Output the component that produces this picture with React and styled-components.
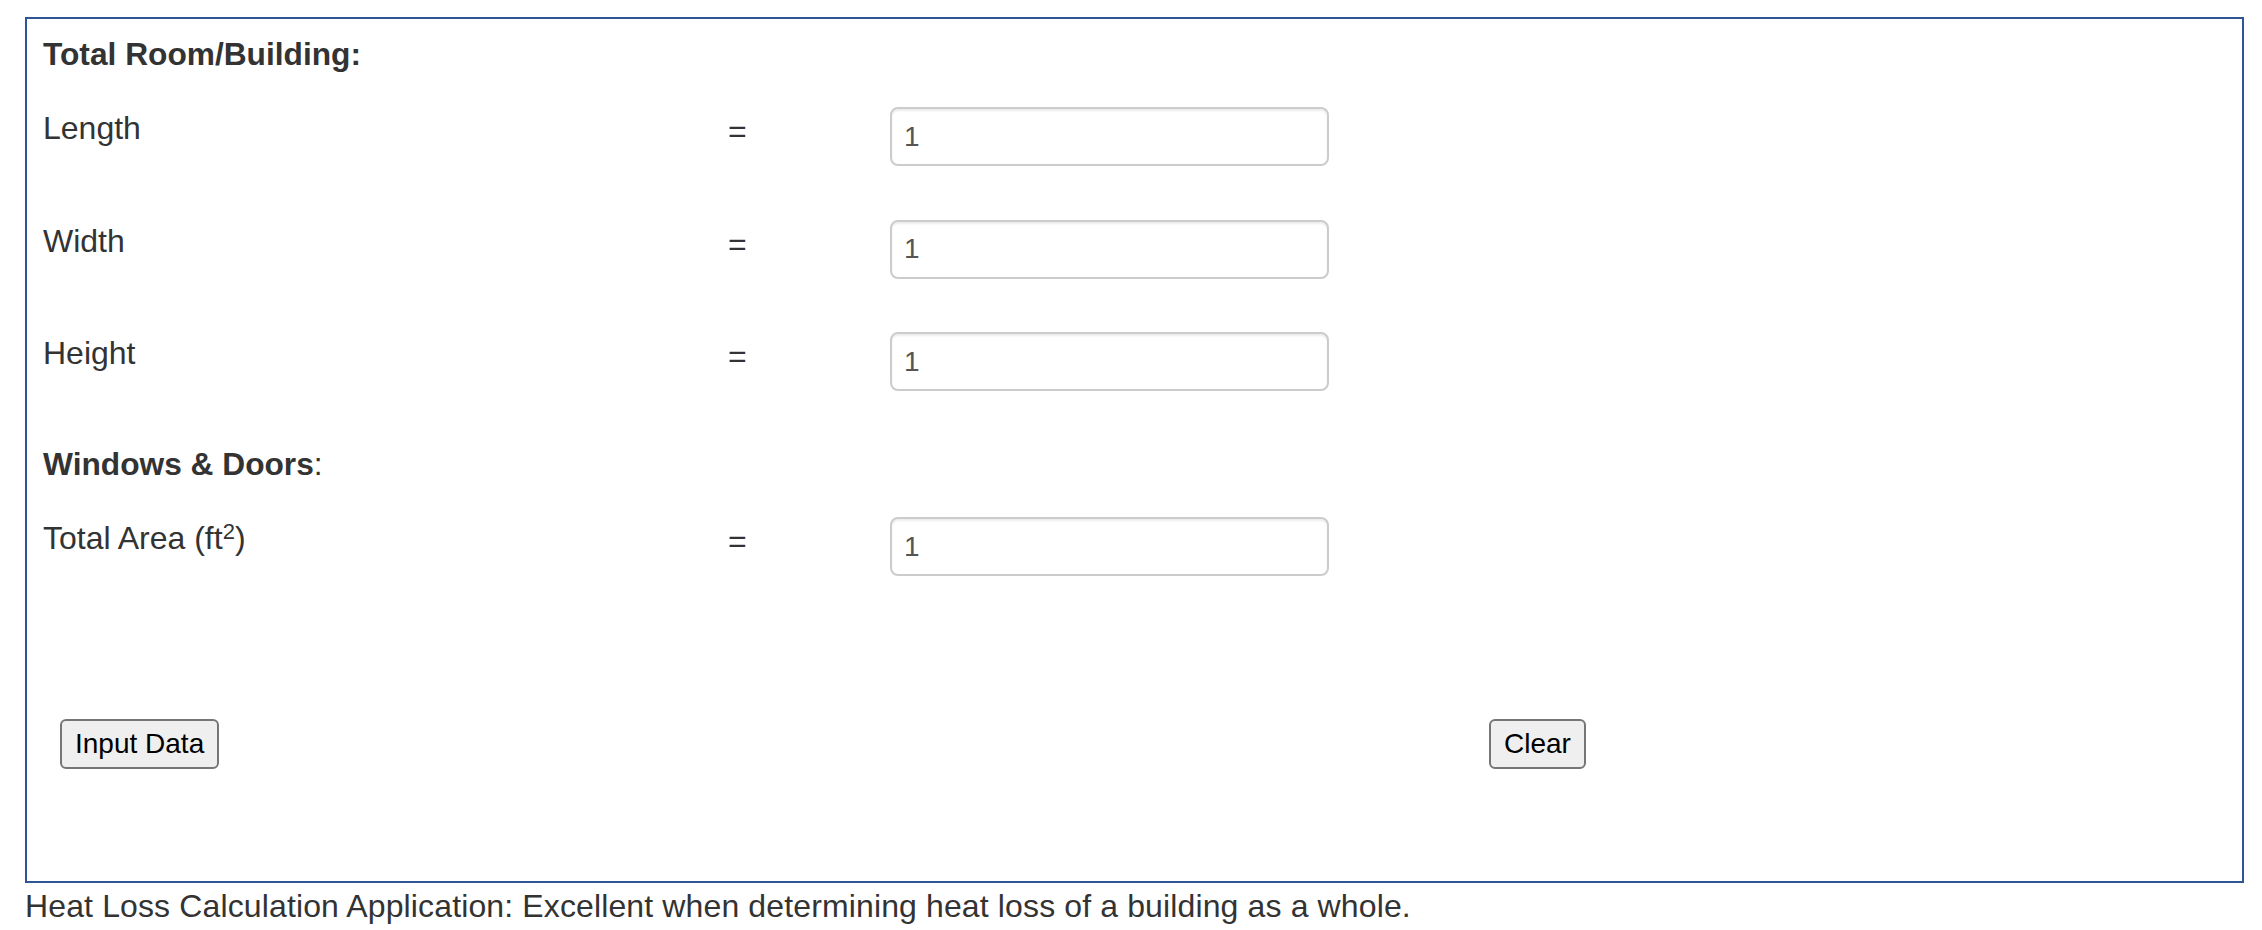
import styled, {createGlobalStyle} from 'styled-components';

const GlobalStyle = createGlobalStyle`
    html, body {
        margin: 0;
        background: #fff;
    }
    body {
        font-family: "Liberation Sans", Arial, Helvetica, sans-serif;
        color: #333;
    }
`

const Page = styled.div`
    padding: 17px 18px 0 25px;
`

const Panel = styled.form`
    border: 2px solid #2f5597;
    padding: 17px 16px 112px 16px;
    display: flex;
    flex-direction: column;
`

const Heading = styled.div`
    font-size: 31.7px;
    line-height: 37px;
    margin-top: ${({first}) => first ? '0' : '55px'};
    margin-bottom: 34px;
    b {
        font-weight: bold;
    }
`

const FieldGrid = styled.div`
    display: grid;
    grid-template-columns: 685px 162px 439px;
    row-gap: 53.5px;
    align-items: start;
`

const Label = styled.div`
    font-size: 32px;
    line-height: 37px;
    margin-top: 3px;
    sup {
        font-size: 22px;
        line-height: 0;
        position: relative;
        top: 2px;
    }
`

const Equals = styled.div`
    font-size: 32px;
    line-height: 37px;
    margin-top: 6px;
`

const Field = styled.input`
    box-sizing: border-box;
    width: 439px;
    height: 59px;
    margin: 0;
    padding: 0 12px;
    border: 2px solid #ccc;
    border-radius: 8px;
    box-shadow: inset 0 2px 2px rgba(0, 0, 0, 0.075);
    font-family: "Liberation Sans", Arial, Helvetica, sans-serif;
    font-size: 28px;
    color: #555;
    background: #fff;
    outline: none;
`

const ButtonRow = styled.div`
    display: grid;
    grid-template-columns: 1446px auto;
    justify-items: start;
    margin-top: 143px;
`

const Button = styled.button`
    box-sizing: border-box;
    height: 50px;
    margin-left: ${({indent}) => indent || 0}px;
    padding: 0 13px;
    border: 2px solid #767676;
    border-radius: 6px;
    background: #efefef;
    font-family: "Liberation Sans", Arial, Helvetica, sans-serif;
    font-size: 28px;
    color: #000;
    cursor: pointer;
`

const Footer = styled.div`
    font-size: 32px;
    line-height: 46px;
    letter-spacing: 0.13px;
    color: #333;
`

const rooms = [
    {name: 'length', label: 'Length'},
    {name: 'width', label: 'Width'},
    {name: 'height', label: 'Height'}
]

const FieldRow = ({label, name}) => <>
    <Label>{label}</Label>
    <Equals>=</Equals>
    <Field type="text" name={name} defaultValue="1" />
</>

export default function App(){
    return <>
        <GlobalStyle />
        <Page>
            <Panel onSubmit={event => event.preventDefault()}>
                <Heading first><b>Total Room/Building:</b></Heading>
                <FieldGrid>
                    {rooms.map(({name, label}) => <FieldRow key={name} name={name} label={label} />)}
                </FieldGrid>
                <Heading><b>Windows &amp; Doors</b>:</Heading>
                <FieldGrid>
                    <FieldRow name="area" label={<>Total Area (ft<sup>2</sup>)</>} />
                </FieldGrid>
                <ButtonRow>
                    <Button type="button" indent={17}>Input Data</Button>
                    <Button type="reset">Clear</Button>
                </ButtonRow>
            </Panel>
            <Footer>Heat Loss Calculation Application: Excellent when determining heat loss of a building as a whole.</Footer>
        </Page>
    </>
}
